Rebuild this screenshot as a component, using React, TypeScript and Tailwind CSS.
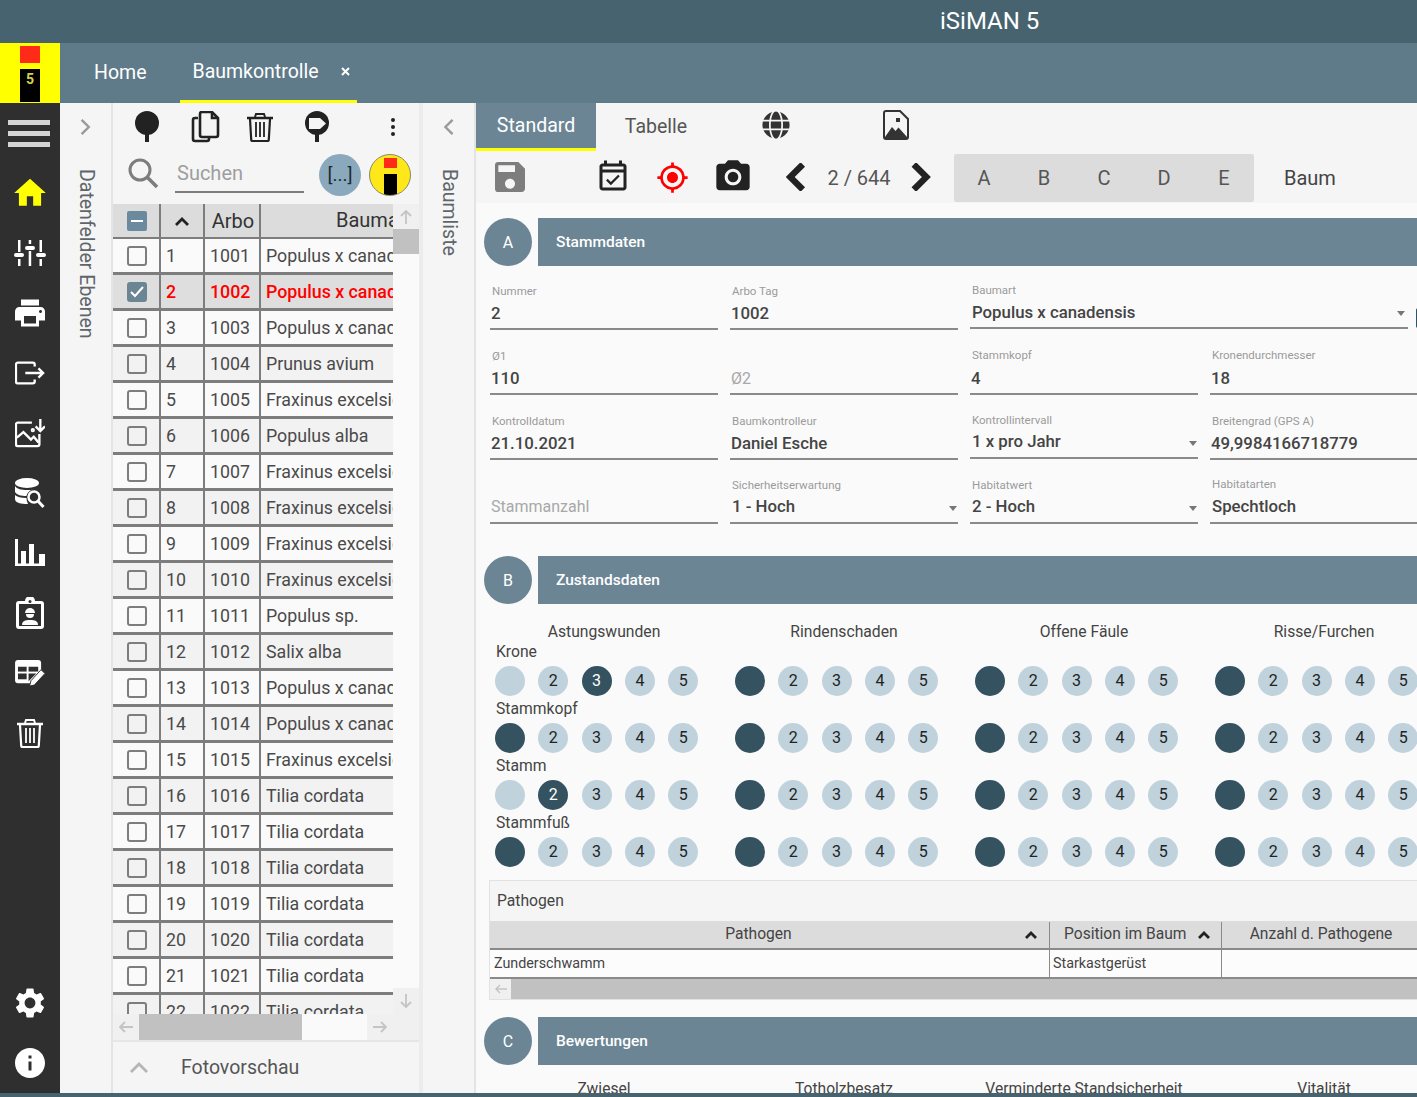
import React from 'react';
import {
  MdHome, MdPrint, MdSettings, MdInfo, MdSave, MdOutlineEventAvailable, MdGpsFixed, MdPhotoCamera,
} from 'react-icons/md';
import { FaGlobe } from 'react-icons/fa';

const rows = [
  ['1', '1001', 'Populus x canadensis'],
  ['2', '1002', 'Populus x canadensis'],
  ['3', '1003', 'Populus x canadensis'],
  ['4', '1004', 'Prunus avium'],
  ['5', '1005', 'Fraxinus excelsior'],
  ['6', '1006', 'Populus alba'],
  ['7', '1007', 'Fraxinus excelsior'],
  ['8', '1008', 'Fraxinus excelsior'],
  ['9', '1009', 'Fraxinus excelsior'],
  ['10', '1010', 'Fraxinus excelsior'],
  ['11', '1011', 'Populus sp.'],
  ['12', '1012', 'Salix alba'],
  ['13', '1013', 'Populus x canadensis'],
  ['14', '1014', 'Populus x canadensis'],
  ['15', '1015', 'Fraxinus excelsior'],
  ['16', '1016', 'Tilia cordata'],
  ['17', '1017', 'Tilia cordata'],
  ['18', '1018', 'Tilia cordata'],
  ['19', '1019', 'Tilia cordata'],
  ['20', '1020', 'Tilia cordata'],
  ['21', '1021', 'Tilia cordata'],
  ['22', '1022', 'Tilia cordata'],
];

const damage = [
  { label: 'Krone', picks: [3, 1, 1, 1] },
  { label: 'Stammkopf', picks: [1, 1, 1, 1] },
  { label: 'Stamm', picks: [2, 1, 1, 1] },
  { label: 'Stammfuß', picks: [1, 1, 1, 1] },
];

const TrashIcon = ({ size = 32, color = '#222' }: { size?: number; color?: string }) => (
  <svg width={size} height={size} viewBox="0 0 32 32" fill="none" stroke={color}>
    <path d="M3 7h26" strokeWidth="2.5" />
    <path d="M11 6l1-3h8l1 3" strokeWidth="2" />
    <path d="M6 8l1.200 20.500a1.500 1.500 0 0 0 1.500 1.500h14.600a1.500 1.500 0 0 0 1.500-1.500L26 8" strokeWidth="2.2" />
    <path d="M12 11v15M16 11v15M20 11v15" strokeWidth="1.8" />
  </svg>
);

const PinIcon = () => (
  <svg width="26" height="32" viewBox="0 0 26 32" fill="#222">
    <circle cx="13" cy="12" r="12" />
    <rect x="11" y="20" width="4" height="11" />
  </svg>
);

const SignPinIcon = () => (
  <svg width="26" height="32" viewBox="0 0 26 32">
    <circle cx="13" cy="12" r="12" fill="#222" />
    <rect x="11" y="20" width="4" height="11" fill="#222" />
    <path d="M5 7h11l6 5.500-6 5.500H5z" fill="#f5f5f5" />
  </svg>
);

const CopyIcon = () => (
  <svg width="30" height="32" viewBox="0 0 30 32" fill="none" stroke="#222" strokeWidth="2.6">
    <path d="M7 7H4a2 2 0 0 0-2 2v19a2 2 0 0 0 2 2h12a2 2 0 0 0 2-2v-2" />
    <path d="M9 3a2 2 0 0 1 2-2h10l6 6v17a2 2 0 0 1-2 2H11a2 2 0 0 1-2-2z" />
    <path d="M21 1v6h6" />
  </svg>
);

const SlidersIcon = () => (
  <svg width="32" height="28" viewBox="0 0 32 28" fill="white">
    <rect x="4" y="1" width="2.500" height="12" />
    <rect x="4" y="20" width="2.500" height="7" />
    <rect x="0" y="14" width="10" height="4" rx="2" />
    <rect x="14.700" y="1" width="2.500" height="4" />
    <rect x="14.700" y="12" width="2.500" height="15" />
    <rect x="11" y="7" width="10" height="4" rx="2" />
    <rect x="25.500" y="1" width="2.500" height="12" />
    <rect x="25.500" y="20" width="2.500" height="7" />
    <rect x="22" y="14" width="10" height="4" rx="2" />
  </svg>
);

const ExitIcon = () => (
  <svg width="30" height="24" viewBox="0 0 32 24" fill="none" stroke="white" strokeWidth="2.500">
    <path d="M21 5V3a2 2 0 0 0-2-2H3a2 2 0 0 0-2 2v18a2 2 0 0 0 2 2h16a2 2 0 0 0 2-2v-2" />
    <path d="M11 12h19M25 7l5 5-5 5" />
  </svg>
);

const ImageDownIcon = () => (
  <svg width="30" height="30" viewBox="0 0 32 32" fill="none" stroke="white" strokeWidth="2.500">
    <path d="M18 5H3a2 2 0 0 0-2 2v21a2 2 0 0 0 2 2h21a2 2 0 0 0 2-2V17" />
    <path d="M2 21l7-6 8 8 3-3 5 6" />
    <path d="M27 1v13M22 9l5 5 5-5" />
    <circle cx="19" cy="13" r="1" />
  </svg>
);

const DbSearchIcon = () => (
  <svg width="30" height="30" viewBox="0 0 30 30" fill="white">
    <ellipse cx="12" cy="5" rx="12" ry="5" />
    <path d="M0 8c2 3 6 4 12 4 2.500 0 5 0 7-1-4 1-7 4-7.500 7C6 18 2 17 0 14z" />
    <path d="M0 17c2 2 6 3 11.500 3 0 2 .5 4 1.500 6C6 26 0 25 0 21z" />
    <circle cx="19" cy="19" r="5.500" fill="none" stroke="white" strokeWidth="2.500" />
    <path d="M23 23l5.500 6" stroke="white" strokeWidth="3" />
  </svg>
);

const BarsIcon = () => (
  <svg width="30" height="28" viewBox="0 0 30 28" fill="white">
    <rect x="0" y="0" width="3" height="27" />
    <rect x="0" y="24.500" width="30" height="2.500" />
    <rect x="6" y="12" width="5" height="14" />
    <rect x="14" y="5" width="5" height="21" />
    <rect x="24" y="15" width="6" height="11" />
  </svg>
);

const ClipboardIcon = () => (
  <svg width="28" height="32" viewBox="0 0 28 32">
    <path d="M3 4h6a5 5 0 0 1 10 0h6a3 3 0 0 1 3 3v22a3 3 0 0 1-3 3H3a3 3 0 0 1-3-3V7a3 3 0 0 1 3-3z" fill="white" />
    <rect x="3" y="7" width="22" height="22" fill="#2f2f2f" />
    <circle cx="14" cy="4.500" r="1.500" fill="#2f2f2f" />
    <path d="M9 16a5 5 0 0 1 10 0z" fill="white" />
    <path d="M10 17h8a4 4 0 0 1-8 0z" fill="white" />
    <path d="M6 28c0-4 3-5 8-5s8 1 8 5z" fill="white" />
  </svg>
);

const TableEditIcon = () => (
  <svg width="31" height="27" viewBox="0 0 32 28">
    <path d="M3 0h21a3 3 0 0 1 3 3v12l-9 9H3a3 3 0 0 1-3-3V3a3 3 0 0 1 3-3z" fill="white" />
    <rect x="3" y="7" width="9" height="5" fill="#2f2f2f" />
    <rect x="14" y="7" width="10" height="5" fill="#2f2f2f" />
    <rect x="3" y="14" width="9" height="6" fill="#2f2f2f" />
    <path d="M14 14h8l-8 8z" fill="#2f2f2f" />
    <path d="M15 27l1.500-5.500L27 10l4 4-11 12z" fill="white" stroke="#2f2f2f" strokeWidth="1" />
  </svg>
);

const PhotoIcon = () => (
  <svg width="26" height="30" viewBox="0 0 26 30">
    <path d="M3 1h14l8 8v18a2 2 0 0 1-2 2H3a2 2 0 0 1-2-2V3a2 2 0 0 1 2-2z" fill="none" stroke="#333" strokeWidth="2" />
    <path d="M2 27l7-10 3.500 4 3-3.500L24 27v1H2z" fill="#333" />
    <rect x="13" y="8" width="4" height="4" fill="#333" />
  </svg>
);

const Chevron = ({ dir, size = 20, stroke = '#222', width = 4 }: { dir: 'l' | 'r'; size?: number; stroke?: string; width?: number }) => (
  <svg width={size * 0.7} height={size} viewBox="0 0 14 20" fill="none" stroke={stroke} strokeWidth={width}>
    <path d={dir === 'l' ? 'M12 1L3 10l9 9' : 'M2 1l9 9-9 9'} />
  </svg>
);

const Checkbox = ({ checked }: { checked?: boolean }) => (
  <span className={`ml-[2px] flex h-[20px] w-[20px] items-center justify-center rounded-[3px] border-2 ${checked ? 'border-[#6b8595] bg-[#6b8595]' : 'border-[#7d7d7d]'}`}>
    {checked && (
      <svg width="16" height="16" viewBox="0 0 16 16" fill="none" stroke="white" strokeWidth="2">
        <path d="M2 8l4 4 8-9" />
      </svg>
    )}
  </span>
);

const Logo = () => (
  <div className="flex h-[60px] w-[60px] shrink-0 flex-col items-center bg-[#ffff00] pt-[3px]">
    <div className="h-[17px] w-[20px] bg-[#ff2a17]" />
    <div className="mt-[6px] flex h-[33px] w-[20px] justify-center bg-black text-[14px] font-bold leading-[20px] text-[#d9d04a]">5</div>
  </div>
);

const SideItem = ({ children }: { children: React.ReactNode }) => (
  <div className="flex h-[60px] items-center justify-center">{children}</div>
);

const Sidebar = () => (
  <div className="flex w-[60px] shrink-0 flex-col bg-[#2f2f2f]">
    <div className="flex h-[60px] flex-col justify-center gap-[6px] px-[8px]">
      <div className="h-[5px] w-[42px] bg-[#d4d4d4]" />
      <div className="h-[5px] w-[42px] bg-[#d4d4d4]" />
      <div className="h-[5px] w-[42px] bg-[#d4d4d4]" />
    </div>
    <SideItem><MdHome size={38} color="#ffff00" /></SideItem>
    <SideItem><SlidersIcon /></SideItem>
    <SideItem><MdPrint size={36} color="white" /></SideItem>
    <SideItem><ExitIcon /></SideItem>
    <SideItem><ImageDownIcon /></SideItem>
    <SideItem><DbSearchIcon /></SideItem>
    <SideItem><BarsIcon /></SideItem>
    <SideItem><ClipboardIcon /></SideItem>
    <SideItem><TableEditIcon /></SideItem>
    <SideItem><TrashIcon size={32} color="white" /></SideItem>
    <div className="mt-auto" />
    <SideItem><MdSettings size={36} color="white" /></SideItem>
    <SideItem><MdInfo size={36} color="white" /></SideItem>
  </div>
);

const SidePanel = ({ title, dir }: { title: string; dir: 'l' | 'r' }) => (
  <div className="flex w-[51px] shrink-0 flex-col items-center bg-[#f5f5f5] pt-[16px]">
    <Chevron dir={dir} size={16} stroke="#9a9a9a" width={3} />
    <div className="mt-[34px] text-[19.5px] leading-[22px] text-[#5f666b] [writing-mode:vertical-rl]">{title}</div>
  </div>
);

const TreeList = () => (
  <div className="flex w-[306px] shrink-0 flex-col bg-[#f5f5f5]">
    <div className="flex h-[47px] shrink-0 items-center">
      <div className="ml-[21px]"><PinIcon /></div>
      <div className="ml-[31px]"><CopyIcon /></div>
      <div className="ml-[23px]"><TrashIcon size={32} /></div>
      <div className="ml-[28px]"><SignPinIcon /></div>
      <div className="ml-[61px] flex flex-col gap-[3px]">
        <span className="h-[4px] w-[4px] rounded-full bg-[#222]" />
        <span className="h-[4px] w-[4px] rounded-full bg-[#222]" />
        <span className="h-[4px] w-[4px] rounded-full bg-[#222]" />
      </div>
    </div>
    <div className="mb-[4px] flex h-[50px] shrink-0 items-center">
      <svg className="mb-[4px] ml-[14px]" width="32" height="32" viewBox="0 0 32 32" fill="none" stroke="#7d7d7d">
        <circle cx="13" cy="13" r="10" strokeWidth="3" />
        <path d="M20.500 20.500L30 30" strokeWidth="3.500" />
      </svg>
      <div className="ml-[16px] flex h-[36px] w-[129px] items-center border-b-2 border-[#7d7d7d] pb-[3px] pl-[2px] text-[20px] text-[#9e9e9e]">Suchen</div>
      <div className="ml-[15px] flex h-[42px] w-[42px] items-center justify-center rounded-full bg-[#8aa9bd] text-[19px] text-[#1d2b33]">[...]</div>
      <div className="ml-[8px] flex h-[42px] w-[42px] flex-col items-center overflow-hidden rounded-full border border-[#8a8a6a] bg-[#ffe81a] pt-[3px]">
        <div className="h-[11px] w-[13px] bg-[#ff2a17]" />
        <div className="mt-[6px] h-[24px] w-[13px] bg-black" />
      </div>
    </div>
    <div className="relative min-h-0 flex-1 overflow-hidden">
      <div className="h-[810px] w-[280px] overflow-hidden">
        <div className="flex h-[35px] border-b-2 border-[#7d7d7d] bg-[#dcdcdc] text-[#333]">
          <div className="flex w-[48px] shrink-0 items-center justify-center border-r-2 border-[#7d7d7d]">
            <span className="ml-[2px] flex h-[20px] w-[20px] items-center justify-center rounded-[2px] bg-[#6b8a9e]">
              <span className="h-[2px] w-[12px] bg-white" />
            </span>
          </div>
          <div className="flex w-[44px] shrink-0 items-center justify-center border-r-2 border-[#7d7d7d]">
            <svg width="14" height="10" viewBox="0 0 14 10" fill="none" stroke="#222" strokeWidth="2.800"><path d="M1 9l6-6 6 6" /></svg>
          </div>
          <div className="flex w-[56px] shrink-0 items-center justify-center border-r-2 border-[#7d7d7d] pl-[2px] text-[20px]">Arbo</div>
          <div className="flex-1 overflow-hidden whitespace-nowrap pl-[75px] pt-[1px] text-[20px]">Baumart</div>
        </div>
        {rows.map((row, i) => {
          const selected = row[0] === '2';
          return (
            <div
              key={row[0]}
              className={`flex h-[36px] border-b-[3px] border-[#7d7d7d] text-[17.8px] leading-[33px] ${selected ? 'bg-[#dedede] font-medium text-[#ff0000]' : i % 2 === 0 ? 'bg-[#fafafa] text-[#4a4a4a]' : 'bg-[#f2f2f2] text-[#4a4a4a]'}`}
            >
              <div className="flex w-[48px] shrink-0 items-center justify-center border-r-2 border-[#7d7d7d]"><Checkbox checked={selected} /></div>
              <div className="w-[44px] shrink-0 border-r-2 border-[#7d7d7d] pl-[5px]">{row[0]}</div>
              <div className="w-[56px] shrink-0 border-r-2 border-[#7d7d7d] pl-[5px]">{row[1]}</div>
              <div className="flex-1 overflow-hidden whitespace-nowrap pl-[5px]">{row[2]}</div>
            </div>
          );
        })}
      </div>
      <div className="absolute right-0 top-0 flex h-[810px] w-[26px] flex-col bg-[#fafafa]">
        <div className="flex h-[25px] items-center justify-center bg-[#f0f0f0] text-[#c4c4c4]">
          <svg width="12" height="14" viewBox="0 0 12 14" fill="none" stroke="#c4c4c4" strokeWidth="1.800"><path d="M6 14V2M1 6l5-5 5 5" /></svg>
        </div>
        <div className="h-[25px] bg-[#c1c1c1]" />
        <div className="mt-auto flex h-[26px] items-center justify-center bg-[#f0f0f0]">
          <svg width="12" height="14" viewBox="0 0 12 14" fill="none" stroke="#c4c4c4" strokeWidth="1.800"><path d="M6 0v12M1 8l5 5 5-5" /></svg>
        </div>
      </div>
    </div>
    <div className="flex h-[26px] shrink-0 bg-[#f0f0f0]">
      <div className="flex w-[26px] items-center justify-center">
        <svg width="14" height="12" viewBox="0 0 14 12" fill="none" stroke="#c4c4c4" strokeWidth="1.800"><path d="M14 6H2M6 1L1 6l5 5" /></svg>
      </div>
      <div className="w-[163px] bg-[#c1c1c1]" />
      <div className="w-[65px] bg-[#fafafa]" />
      <div className="flex w-[26px] items-center justify-center">
        <svg width="14" height="12" viewBox="0 0 14 12" fill="none" stroke="#c4c4c4" strokeWidth="1.800"><path d="M0 6h12M8 1l5 5-5 5" /></svg>
      </div>
    </div>
    <div className="flex h-[53px] shrink-0 items-center border-t-2 border-[#e6e6e6]">
      <svg className="ml-[17px]" width="18" height="11" viewBox="0 0 18 11" fill="none" stroke="#b5b5b5" strokeWidth="2.800"><path d="M1 10l8-8 8 8" /></svg>
      <span className="ml-[33px] pt-px text-[19.5px] text-[#555]">Fotovorschau</span>
    </div>
  </div>
);

const SectionHead = ({ letter, title }: { letter: string; title: string }) => (
  <div className="flex gap-[6px] pl-[8px]">
    <div className="flex h-[48px] w-[48px] shrink-0 items-center justify-center rounded-full bg-[#6b8595] pt-px text-[16px] text-white">{letter}</div>
    <div className="flex h-[48px] w-[900px] shrink-0 items-center bg-[#6b8595] pl-[18px] pt-px text-[15.5px] font-medium text-white">{title}</div>
  </div>
);

type FieldProps = {
  label: string;
  value?: string;
  placeholder?: string;
  select?: boolean;
  wide?: boolean;
  hi?: boolean;
  short?: boolean;
  lift?: boolean;
  inset?: boolean;
};

const Field = ({ label, value, placeholder, select, wide, hi, short, lift, inset }: FieldProps) => (
  <div className={`relative flex flex-col justify-end ${short ? 'h-[64px]' : 'h-[65px]'} ${select ? 'pb-px' : ''} ${wide ? 'col-span-2 pr-[30px]' : ''}`}>
    {label && <div className={`pl-[2px] text-[11.5px] leading-[15px] text-[#9a9a9a] ${hi ? 'h-[17px]' : 'h-[16px]'}`}>{label}</div>}
    <div className={`flex h-[30px] items-center justify-between border-b-2 border-[#8a8a8a] pl-px ${wide ? 'pr-[3px]' : 'pr-px'}`}>
      {value ? (
        <span className={`text-[16.8px] font-medium text-[#444] ${select || inset ? 'pl-px' : ''} ${lift ? '-translate-y-px' : ''}`}>{value}</span>
      ) : (
        <span className={`text-[16px] text-[#a8a8a8] ${lift ? '-translate-y-px' : ''}`}>{placeholder}</span>
      )}
      {select && <span className="h-0 w-0 border-x-[4.5px] border-t-[5px] border-x-transparent border-t-[#777]" />}
    </div>
    {wide && <div className="absolute bottom-[2px] left-[446px] h-[20px] w-[20px] rounded-[2px] bg-[#34525f]" />}
  </div>
);

const Scale = ({ pick }: { pick: number }) => (
  <div className="flex gap-[13.3px] pl-[11px]">
    {[1, 2, 3, 4, 5].map((n) => (
      <div
        key={n}
        className={`flex h-[30px] w-[30px] items-center justify-center rounded-full text-[16px] ${n === pick ? 'bg-[#34525f] text-white' : 'bg-[#c0d2dc] text-[#222]'}`}
      >
        {n === 1 ? '' : n}
      </div>
    ))}
  </div>
);

const Detail = () => (
  <div className="flex min-w-0 flex-1 flex-col overflow-hidden">
    <div className="flex h-[48px] shrink-0 bg-[#f5f5f5] text-[19.5px] text-[#555]">
      <div className="flex w-[120px] items-center justify-center border-b-[3px] border-[#ffff00] bg-[#6b8595] text-white">Standard</div>
      <div className="flex w-[120px] items-center justify-center">Tabelle</div>
      <div className="flex w-[120px] items-center justify-center pb-[4px]"><FaGlobe size={28} color="#333" /></div>
      <div className="flex w-[120px] items-center justify-center pb-[4px]"><PhotoIcon /></div>
    </div>
    <div className="flex h-[52px] shrink-0 items-center bg-[#f5f5f5]">
      <div className="flex w-[68px] justify-center"><MdSave size={40} color="#7d7d7d" /></div>
      <div className="ml-[40px] flex w-[58px] justify-center"><MdOutlineEventAvailable size={36} color="#222" /></div>
      <div className="flex w-[60px] justify-center"><MdGpsFixed size={33} color="#ff0000" /></div>
      <div className="flex w-[62px] justify-center"><MdPhotoCamera size={40} color="#222" /></div>
      <div className="flex w-[64px] justify-center"><Chevron dir="l" size={28} width={4.5} /></div>
      <div className="mt-[2px] flex w-[62px] justify-center whitespace-nowrap text-[20px] text-[#555]">2 / 644</div>
      <div className="flex w-[62px] justify-center"><Chevron dir="r" size={28} width={4.5} /></div>
      <div className="ml-[2px] mt-[2px] flex h-[48px] w-[300px] items-center rounded-[2px] bg-[#dcdcdc] text-[20px] text-[#555]">
        {['A', 'B', 'C', 'D', 'E'].map((l) => (
          <div key={l} className="w-[60px] text-center">{l}</div>
        ))}
      </div>
      <div className="ml-[30px] mt-[2px] text-[20px] text-[#444]">Baum</div>
    </div>
    <div className="min-h-0 flex-1 overflow-hidden bg-[#fafafa] pt-[15px]">
      <SectionHead letter="A" title="Stammdaten" />
      <div className="relative -mt-px grid w-[948px] grid-cols-[repeat(4,228px)] gap-x-[12px] pl-[14px]">
        <Field label="Nummer" value="2" />
        <Field label="Arbo Tag" value="1002" />
        <Field label="Baumart" value="Populus x canadensis" select wide />
        <Field label="Ø1" value="110" />
        <Field label="" placeholder="Ø2" />
        <Field label="Stammkopf" value="4" hi />
        <Field label="Kronendurchmesser" value="18" hi />
        <Field label="Kontrolldatum" value="21.10.2021" />
        <Field label="Baumkontrolleur" value="Daniel Esche" />
        <Field label="Kontrollintervall" value="1 x pro Jahr" select lift />
        <Field label="Breitengrad (GPS A)" value="49,9984166718779" />
        <Field label="" placeholder="Stammanzahl" short lift />
        <Field label="Sicherheitserwartung" value="1 - Hoch" select lift />
        <Field label="Habitatwert" value="2 - Hoch" select lift />
        <Field label="Habitatarten" value="Spechtloch" hi short lift inset />
      </div>
      <div className="mt-[31px]"><SectionHead letter="B" title="Zustandsdaten" /></div>
      <div className="w-[968px] pl-[8px] pt-[16px] text-[#444]">
        <div className="grid h-[22px] grid-cols-[repeat(4,240px)] text-center text-[15.7px]">
          <div>Astungswunden</div>
          <div>Rindenschaden</div>
          <div>Offene Fäule</div>
          <div>Risse/Furchen</div>
        </div>
        {damage.map((row) => (
          <div key={row.label}>
            <div className="h-[20px] pl-[12px] text-[15.7px] leading-[20px]">{row.label}</div>
            <div className="grid h-[37px] grid-cols-[repeat(4,240px)] items-center">
              {row.picks.map((pick, i) => (
                <Scale key={i} pick={pick} />
              ))}
            </div>
          </div>
        ))}
      </div>
      <div className="ml-[13px] mt-[10px] w-[940px] border border-[#e2e2e2] bg-[#f5f5f5] text-[#444]">
        <div className="flex h-[40px] items-center pl-[7px] text-[15.7px]">Pathogen</div>
        <div className="flex h-[29px] border-b-2 border-[#8a8a8a] bg-[#dcdcdc] pt-px text-[15.6px]">
          <div className="relative flex w-[560px] items-center justify-center border-r border-[#8a8a8a] pr-[22px]">
            <span>Pathogen</span>
            <svg className="absolute right-[12px] top-[9px]" width="12" height="8" viewBox="0 0 12 8" fill="none" stroke="#222" strokeWidth="2.800"><path d="M1 7l5-5 5 5" /></svg>
          </div>
          <div className="flex w-[172px] items-center gap-[11px] border-r border-[#8a8a8a] pl-[14px]">
            <span>Position im Baum</span>
            <svg width="12" height="8" viewBox="0 0 12 8" fill="none" stroke="#222" strokeWidth="2.800"><path d="M1 7l5-5 5 5" /></svg>
          </div>
          <div className="flex w-[198px] items-center justify-center">Anzahl d. Pathogene</div>
        </div>
        <div className="flex h-[29px] border-b-2 border-[#8a8a8a] bg-[#fcfcfc] text-[14.3px]">
          <div className="flex w-[560px] items-center border-r border-[#8a8a8a] pl-[4px]">Zunderschwamm</div>
          <div className="flex w-[172px] items-center border-r border-[#8a8a8a] pl-[3px]">Starkastgerüst</div>
          <div className="w-[198px]" />
        </div>
        <div className="flex h-[20px] bg-[#c1c1c1]">
          <div className="flex w-[21px] items-center justify-center bg-[#f0f0f0]">
            <svg width="12" height="10" viewBox="0 0 12 10" fill="none" stroke="#c4c4c4" strokeWidth="1.500"><path d="M12 5H2M5 1L1 5l4 4" /></svg>
          </div>
        </div>
      </div>
      <div className="mt-[17px]"><SectionHead letter="C" title="Bewertungen" /></div>
      <div className="grid w-[968px] grid-cols-[repeat(4,240px)] pl-[8px] pt-[13px] text-center text-[15.6px] text-[#444]">
        <div>Zwiesel</div>
        <div>Totholzbesatz</div>
        <div>Verminderte Standsicherheit</div>
        <div>Vitalität</div>
      </div>
    </div>
  </div>
);

export default function App() {
  return (
    <div className="flex h-[1097px] w-[1417px] flex-col overflow-hidden bg-[#f5f5f5] font-['Roboto',sans-serif]">
      <div className="flex h-[43px] shrink-0 items-center bg-[#46636f] pb-[2px] pl-[940px] text-[24px] text-white">iSiMAN 5</div>
      <div className="flex h-[60px] shrink-0 bg-[#5f7b8a] text-[19.5px] text-white">
        <Logo />
        <div className="ml-[34px] flex items-center">Home</div>
        <div className="ml-[34px] flex w-[177px] items-center border-b-[3px] border-[#ffff00] pl-[12px]">
          <span>Baumkontrolle</span>
          <svg className="ml-[22px]" width="9" height="9" viewBox="0 0 9 9" fill="none" stroke="white" strokeWidth="2"><path d="M1 1l7 7M8 1L1 8" /></svg>
        </div>
      </div>
      <div className="flex min-h-0 flex-1">
        <Sidebar />
        <SidePanel title="Datenfelder Ebenen" dir="r" />
        <div className="w-[2px] shrink-0 bg-[#e4e4e4]" />
        <TreeList />
        <div className="w-[4px] shrink-0 bg-[#ececec]" />
        <SidePanel title="Baumliste" dir="l" />
        <div className="w-[2px] shrink-0 bg-[#e4e4e4]" />
        <Detail />
      </div>
      <div className="h-[4px] shrink-0 bg-[#46636f]" />
    </div>
  );
}
